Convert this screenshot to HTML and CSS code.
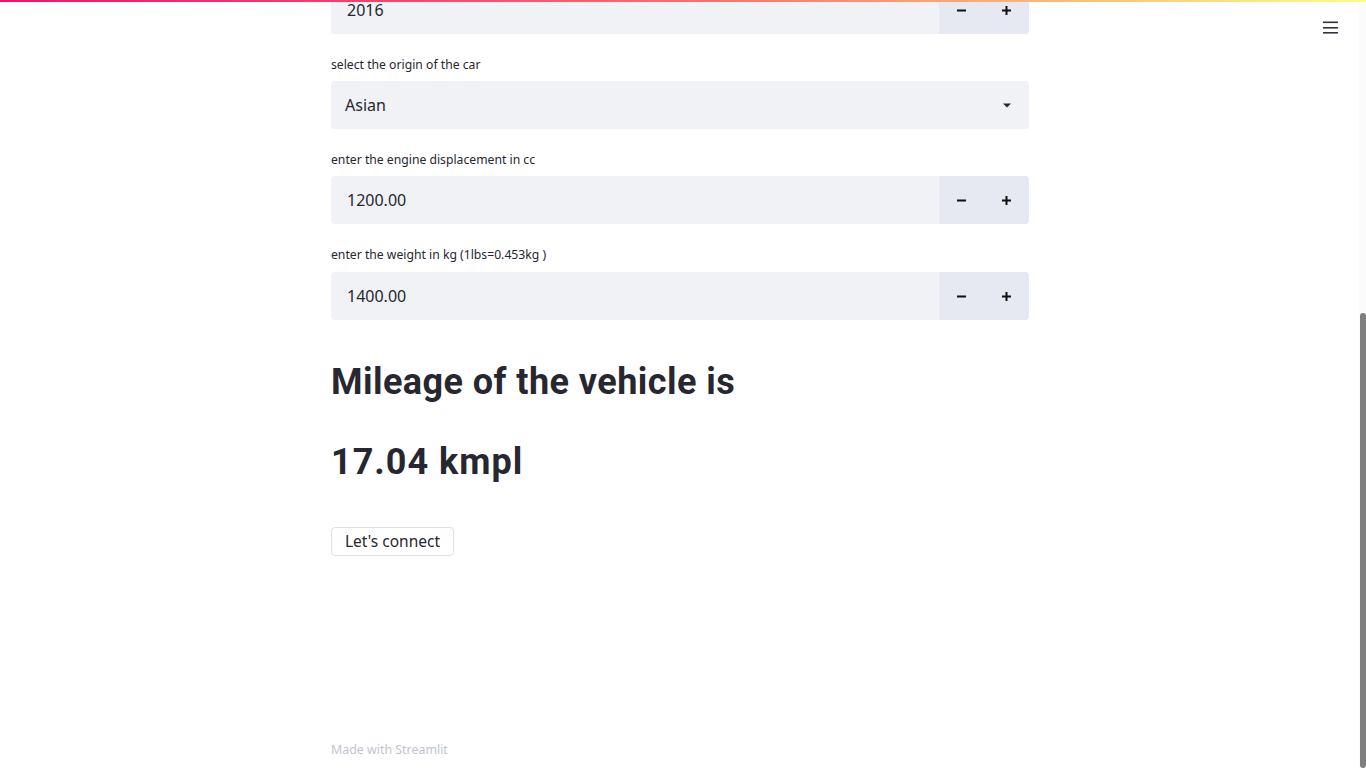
FILE: index.html
```html
<!DOCTYPE html>
<html lang="en">
<head>
<meta charset="utf-8">
<title>Mileage predictor</title>
<link rel="stylesheet" href="styles.css">
</head>
<body>
<div class="decoration"></div>
<button class="menu" aria-label="menu">
  <svg width="15" height="13" viewBox="0 0 15 13"><rect x="0" y="0.5" width="15" height="1.6" fill="#31333f"/><rect x="0" y="6" width="15" height="1.6" fill="#31333f"/><rect x="0" y="11" width="15" height="1.6" fill="#31333f"/></svg>
</button>
<main class="main">
  <div class="block">
    <div class="widget first">
      <div class="numinput">
        <div class="field">2016</div>
        <div class="step"><span class="btn"><svg width="9" height="9" viewBox="0 0 9 9"><rect x="0" y="3.5" width="9" height="2" fill="#111"/></svg></span><span class="btn"><svg width="9" height="9" viewBox="0 0 9 9"><rect x="0" y="3.5" width="9" height="2" fill="#111"/><rect x="3.5" y="0" width="2" height="9" fill="#111"/></svg></span></div>
      </div>
    </div>
    <div class="widget">
      <label class="label">select the origin of the car</label>
      <div class="select">
        <span class="sel-val">Asian</span>
        <svg class="caret" width="8" height="5" viewBox="0 0 8 5"><path d="M0 0.5H8L4 4.5Z" fill="#262730"/></svg>
      </div>
    </div>
    <div class="widget">
      <label class="label">enter the engine displacement in cc</label>
      <div class="numinput">
        <div class="field">1200.00</div>
        <div class="step"><span class="btn"><svg width="9" height="9" viewBox="0 0 9 9"><rect x="0" y="3.5" width="9" height="2" fill="#111"/></svg></span><span class="btn"><svg width="9" height="9" viewBox="0 0 9 9"><rect x="0" y="3.5" width="9" height="2" fill="#111"/><rect x="3.5" y="0" width="2" height="9" fill="#111"/></svg></span></div>
      </div>
    </div>
    <div class="widget last">
      <label class="label">enter the weight in kg (1lbs=0.453kg )</label>
      <div class="numinput">
        <div class="field">1400.00</div>
        <div class="step"><span class="btn"><svg width="9" height="9" viewBox="0 0 9 9"><rect x="0" y="3.5" width="9" height="2" fill="#111"/></svg></span><span class="btn"><svg width="9" height="9" viewBox="0 0 9 9"><rect x="0" y="3.5" width="9" height="2" fill="#111"/><rect x="3.5" y="0" width="2" height="9" fill="#111"/></svg></span></div>
      </div>
    </div>
    <h2 class="heading h-first">Mileage of the vehicle is</h2>
    <h2 class="heading h-second">17.04 kmpl</h2>
    <div class="btn-row"><button class="link-btn">Let's connect</button></div>
  </div>
  <footer class="footer">Made with Streamlit</footer>
</main>
<div class="scrollbar"><div class="thumb"></div></div>
</body>
</html>
```
FILE: styles.css
```css
html, body {
  margin: 0;
  padding: 0;
  height: 100%;
  overflow: hidden;
  background: #ffffff;
  font-family: "Noto Sans", "Open Sans", sans-serif;
  color: #262730;
}

.decoration {
  position: fixed;
  top: 0;
  left: 0;
  right: 0;
  height: 2px;
  background: linear-gradient(90deg, #ff0a6c 0%, #ff6b6b 50%, #fffd80 100%);
  z-index: 5;
}

.menu {
  position: fixed;
  top: 21px;
  left: 1323px;
  padding: 0;
  border: none;
  background: none;
  line-height: 0;
}

.main {
  width: 698px;
  margin-left: 331px;
  height: 768px;
  display: flex;
  flex-direction: column;
}

.block {
  display: flex;
  flex-direction: column;
  flex: 1;
}

.widget {
  display: flex;
  flex-direction: column;
  margin-top: 19px;
}

.widget.first {
  margin-top: -14px;
}

.widget.last {
  margin-top: 19px;
}

.widget.last .label {
  margin-bottom: 6px;
}

.label {
  font-size: 12.2px;
  line-height: 22px;
  height: 22px;
  padding-top: 1px;
  margin-bottom: 5px;
  color: #262730;
}

.numinput, .select {
  height: 48px;
  border-radius: 4px;
  background: #f0f2f6;
  display: flex;
  align-items: center;
  overflow: hidden;
}

.field {
  flex: 1;
  padding-left: 16px;
  font-size: 16px;
  line-height: 48px;
}

.step {
  display: flex;
  height: 100%;
  background: #e6e9f1;
}

.btn {
  width: 45px;
  height: 100%;
  display: flex;
  align-items: center;
  justify-content: center;
}

.select {
  justify-content: space-between;
  padding: 0 18px 0 14px;
}

.sel-val {
  font-size: 16px;
}

.heading {
  font-family: Roboto, "Noto Sans", sans-serif;
  font-size: 36px;
  font-weight: 700;
  letter-spacing: 0.45px;
  line-height: 44px;
  margin: 0;
  color: #262730;
}

.h-first {
  margin-top: 40px;
}

.h-second {
  margin-top: 36px;
  letter-spacing: 1px;
}

.btn-row {
  margin-top: 43px;
}

.link-btn {
  font-family: inherit;
  font-size: 15.5px;
  color: #262730;
  background: #ffffff;
  border: 1px solid #dfe1e7;
  border-radius: 4px;
  height: 29px;
  padding: 0 13px;
  line-height: 27px;
}

.footer {
  font-size: 12.4px;
  color: #c1c4d0;
  line-height: 18px;
  margin-bottom: 9px;
}

.scrollbar {
  position: fixed;
  top: 0;
  right: 0;
  width: 7px;
  height: 768px;
  background: #fbfbfb;
}

.thumb {
  margin-top: 313px;
  margin-left: 1px;
  width: 6px;
  height: 455px;
  border-radius: 3px;
  background: #7f7f7f;
}
```
